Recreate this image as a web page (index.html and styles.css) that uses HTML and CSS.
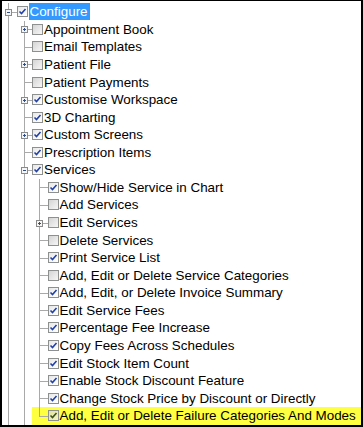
FILE: index.html
```html
<!DOCTYPE html>
<html>
<head>
<meta charset="utf-8">
<link rel="stylesheet" href="styles.css">
</head>
<body>
<div class="frame">
  <div class="row"><span class="c"><svg class="exp" viewBox="0 0 7 7"><rect x=".5" y=".5" width="6" height="6"/><path d="M2 3.5h3"/></svg></span><span class="cb on"><svg viewBox="0 0 9 9"><path d="M1.5 4.5l2 2 4-4.5"/></svg></span><span class="lbl sel">Configure</span></div>

  <div class="row"><span class="g"></span><span class="c"><svg class="exp" viewBox="0 0 7 7"><rect x=".5" y=".5" width="6" height="6"/><path d="M2 3.5h3M3.5 2v3"/></svg></span><span class="cb"></span><span class="lbl">Appointment Book</span></div>
  <div class="row"><span class="g"></span><span class="c"></span><span class="cb"></span><span class="lbl">Email Templates</span></div>
  <div class="row"><span class="g"></span><span class="c"><svg class="exp" viewBox="0 0 7 7"><rect x=".5" y=".5" width="6" height="6"/><path d="M2 3.5h3M3.5 2v3"/></svg></span><span class="cb"></span><span class="lbl">Patient File</span></div>
  <div class="row"><span class="g"></span><span class="c"></span><span class="cb"></span><span class="lbl">Patient Payments</span></div>
  <div class="row"><span class="g"></span><span class="c"><svg class="exp" viewBox="0 0 7 7"><rect x=".5" y=".5" width="6" height="6"/><path d="M2 3.5h3M3.5 2v3"/></svg></span><span class="cb on"><svg viewBox="0 0 9 9"><path d="M1.5 4.5l2 2 4-4.5"/></svg></span><span class="lbl">Customise Workspace</span></div>
  <div class="row"><span class="g"></span><span class="c"></span><span class="cb on"><svg viewBox="0 0 9 9"><path d="M1.5 4.5l2 2 4-4.5"/></svg></span><span class="lbl">3D Charting</span></div>
  <div class="row"><span class="g"></span><span class="c"><svg class="exp" viewBox="0 0 7 7"><rect x=".5" y=".5" width="6" height="6"/><path d="M2 3.5h3M3.5 2v3"/></svg></span><span class="cb on"><svg viewBox="0 0 9 9"><path d="M1.5 4.5l2 2 4-4.5"/></svg></span><span class="lbl">Custom Screens</span></div>
  <div class="row"><span class="g"></span><span class="c"></span><span class="cb on"><svg viewBox="0 0 9 9"><path d="M1.5 4.5l2 2 4-4.5"/></svg></span><span class="lbl">Prescription Items</span></div>
  <div class="row"><span class="g"></span><span class="c"><svg class="exp" viewBox="0 0 7 7"><rect x=".5" y=".5" width="6" height="6"/><path d="M2 3.5h3"/></svg></span><span class="cb on"><svg viewBox="0 0 9 9"><path d="M1.5 4.5l2 2 4-4.5"/></svg></span><span class="lbl">Services</span></div>

  <div class="row"><span class="g"></span><span class="g"></span><span class="c"></span><span class="cb on"><svg viewBox="0 0 9 9"><path d="M1.5 4.5l2 2 4-4.5"/></svg></span><span class="lbl">Show/Hide Service in Chart</span></div>
  <div class="row"><span class="g"></span><span class="g"></span><span class="c"></span><span class="cb"></span><span class="lbl">Add Services</span></div>
  <div class="row"><span class="g"></span><span class="g"></span><span class="c"><svg class="exp" viewBox="0 0 7 7"><rect x=".5" y=".5" width="6" height="6"/><path d="M2 3.5h3M3.5 2v3"/></svg></span><span class="cb"></span><span class="lbl">Edit Services</span></div>
  <div class="row"><span class="g"></span><span class="g"></span><span class="c"></span><span class="cb"></span><span class="lbl">Delete Services</span></div>
  <div class="row"><span class="g"></span><span class="g"></span><span class="c"></span><span class="cb on"><svg viewBox="0 0 9 9"><path d="M1.5 4.5l2 2 4-4.5"/></svg></span><span class="lbl">Print Service List</span></div>
  <div class="row"><span class="g"></span><span class="g"></span><span class="c"></span><span class="cb"></span><span class="lbl">Add, Edit or Delete Service Categories</span></div>
  <div class="row"><span class="g"></span><span class="g"></span><span class="c"></span><span class="cb on"><svg viewBox="0 0 9 9"><path d="M1.5 4.5l2 2 4-4.5"/></svg></span><span class="lbl">Add, Edit, or Delete Invoice Summary</span></div>
  <div class="row"><span class="g"></span><span class="g"></span><span class="c"></span><span class="cb on"><svg viewBox="0 0 9 9"><path d="M1.5 4.5l2 2 4-4.5"/></svg></span><span class="lbl">Edit Service Fees</span></div>
  <div class="row"><span class="g"></span><span class="g"></span><span class="c"></span><span class="cb on"><svg viewBox="0 0 9 9"><path d="M1.5 4.5l2 2 4-4.5"/></svg></span><span class="lbl">Percentage Fee Increase</span></div>
  <div class="row"><span class="g"></span><span class="g"></span><span class="c"></span><span class="cb on"><svg viewBox="0 0 9 9"><path d="M1.5 4.5l2 2 4-4.5"/></svg></span><span class="lbl">Copy Fees Across Schedules</span></div>
  <div class="row"><span class="g"></span><span class="g"></span><span class="c"></span><span class="cb on"><svg viewBox="0 0 9 9"><path d="M1.5 4.5l2 2 4-4.5"/></svg></span><span class="lbl">Edit Stock Item Count</span></div>
  <div class="row"><span class="g"></span><span class="g"></span><span class="c"></span><span class="cb on"><svg viewBox="0 0 9 9"><path d="M1.5 4.5l2 2 4-4.5"/></svg></span><span class="lbl">Enable Stock Discount Feature</span></div>
  <div class="row"><span class="g"></span><span class="g"></span><span class="c"></span><span class="cb on"><svg viewBox="0 0 9 9"><path d="M1.5 4.5l2 2 4-4.5"/></svg></span><span class="lbl">Change Stock Price by Discount or Directly</span></div>
  <div class="row mark"><span class="g"></span><span class="g"></span><span class="c last"></span><span class="cb on"><svg viewBox="0 0 9 9"><path d="M1.5 4.5l2 2 4-4.5"/></svg></span><span class="lbl">Add, Edit or Delete Failure Categories And Modes</span></div>
</div>
</body>
</html>
```

FILE: styles.css
```css
html, body {
  margin: 0;
  padding: 0;
  background: #ffffff;
}

.frame {
  box-sizing: border-box;
  width: 363px;
  height: 427px;
  border-top: 1px solid #000;
  border-left: 2px solid #000;
  border-right: 2px solid #000;
  border-bottom: 2px solid #000;
  padding-top: 2px;
  overflow: hidden;
  font-family: "Liberation Sans", Arial, sans-serif;
  font-size: 13.4px;
  color: #000;
}

.row {
  display: flex;
  align-items: center;
  height: 17.57px;
  white-space: nowrap;
}

.row.mark {
  background: linear-gradient(to right, transparent 30px, #ffff42 30px);
}

.g, .c {
  flex: none;
  align-self: stretch;
  position: relative;
}

.g {
  width: 15.5px;
}

.c {
  width: 14.5px;
}

.g::before, .c::before {
  content: "";
  position: absolute;
  left: 6px;
  top: 0;
  bottom: 0;
  width: 1px;
  background: #a9a9a9;
}

.c.last::before {
  bottom: 50%;
}

.c::after {
  content: "";
  position: absolute;
  left: 6px;
  right: 0;
  top: 50%;
  height: 1px;
  background: #a9a9a9;
}

.exp {
  position: absolute;
  left: 3px;
  top: 50%;
  width: 7px;
  height: 7px;
  margin-top: -3px;
  z-index: 1;
}

.exp rect {
  fill: #f6f6f6;
  stroke: #8a8a8a;
  stroke-width: 1;
}

.exp path {
  stroke: #2e4f8f;
  stroke-width: 1;
  fill: none;
}

.cb {
  flex: none;
  box-sizing: border-box;
  width: 11px;
  height: 11px;
  border: 1px solid #8e8f8f;
  background: linear-gradient(135deg, #d4d4d4 0%, #e9e9e9 60%, #f6f6f6 100%);
  display: flex;
  align-items: center;
  justify-content: center;
}

.cb.on {
  background: linear-gradient(135deg, #e6e6e6 0%, #f8f8f8 60%, #ffffff 100%);
}

.row.mark .cb.on {
  background: linear-gradient(135deg, #e2e2a0 0%, #f4f4c0 100%);
}

.cb svg {
  width: 9px;
  height: 9px;
}

.cb svg path {
  fill: none;
  stroke: #2140a8;
  stroke-width: 1.6;
}

.row.mark .cb svg path {
  stroke: #3a5020;
}

.lbl {
  margin-left: 0;
  padding: 0 1px;
  line-height: 17px;
}

.lbl.sel {
  margin-left: 1px;
  padding: 0 2px 0 1px;
  background: #3399ff;
  color: #ffffff;
}
```
